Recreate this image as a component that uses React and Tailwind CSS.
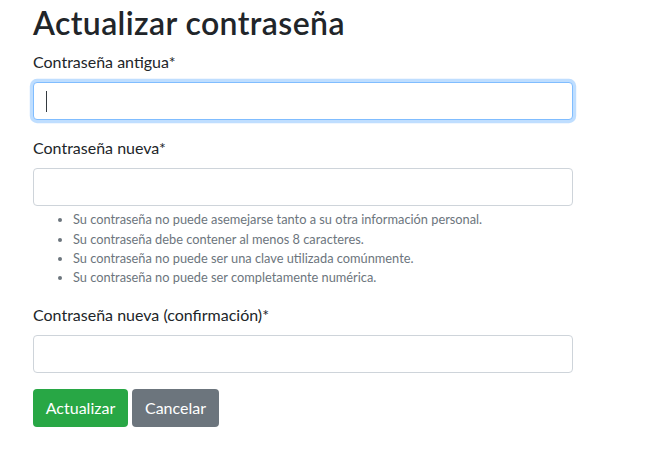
import React from "react";

const inputBase =
  "block w-[540px] h-[38px] rounded-[4px] border bg-white px-3 text-base text-[#495057] outline-none";

function Field({ label, focused, children }) {
  return (
    <div className="mb-4">
      <label className="block mb-2 text-base leading-6 text-[#212529]">{label}</label>
      <div className="relative w-[540px]">
        <input
          type="password"
          className={`${inputBase} ${
            focused
              ? "border-[#80bdff] shadow-[0_0_0_3.2px_rgba(0,123,255,0.25)]"
              : "border-[#ced4da]"
          }`}
        />
        {focused && <span className="absolute left-[13px] top-[9px] h-[21px] w-px bg-[#343a40]" />}
      </div>
      {children}
    </div>
  );
}

export default function App() {
  return (
    <div className="min-h-screen bg-white pl-[33px] pt-1 font-['Lato','Liberation_Sans',sans-serif]">
      <h2 className="mb-2 text-[32px] font-semibold leading-[1.2] tracking-[0.4px] text-[#212529]">
        Actualizar contraseña
      </h2>
      <form>
        <Field label="Contraseña antigua*" focused />
        <Field label="Contraseña nueva*">
          <ul className="mt-1 list-disc pl-10 text-[12.8px] leading-[1.5] text-[#6c757d]">
            <li>Su contraseña no puede asemejarse tanto a su otra información personal.</li>
            <li>Su contraseña debe contener al menos 8 caracteres.</li>
            <li>Su contraseña no puede ser una clave utilizada comúnmente.</li>
            <li>Su contraseña no puede ser completamente numérica.</li>
          </ul>
        </Field>
        <Field label="Contraseña nueva (confirmación)*" />
        <div className="flex gap-1">
          <button type="button" className="h-[38px] w-[95px] rounded-[4px] bg-[#28a745] text-base text-white">
            Actualizar
          </button>
          <button type="button" className="h-[38px] w-[87px] rounded-[4px] bg-[#6c757d] text-base text-white">
            Cancelar
          </button>
        </div>
      </form>
    </div>
  );
}
